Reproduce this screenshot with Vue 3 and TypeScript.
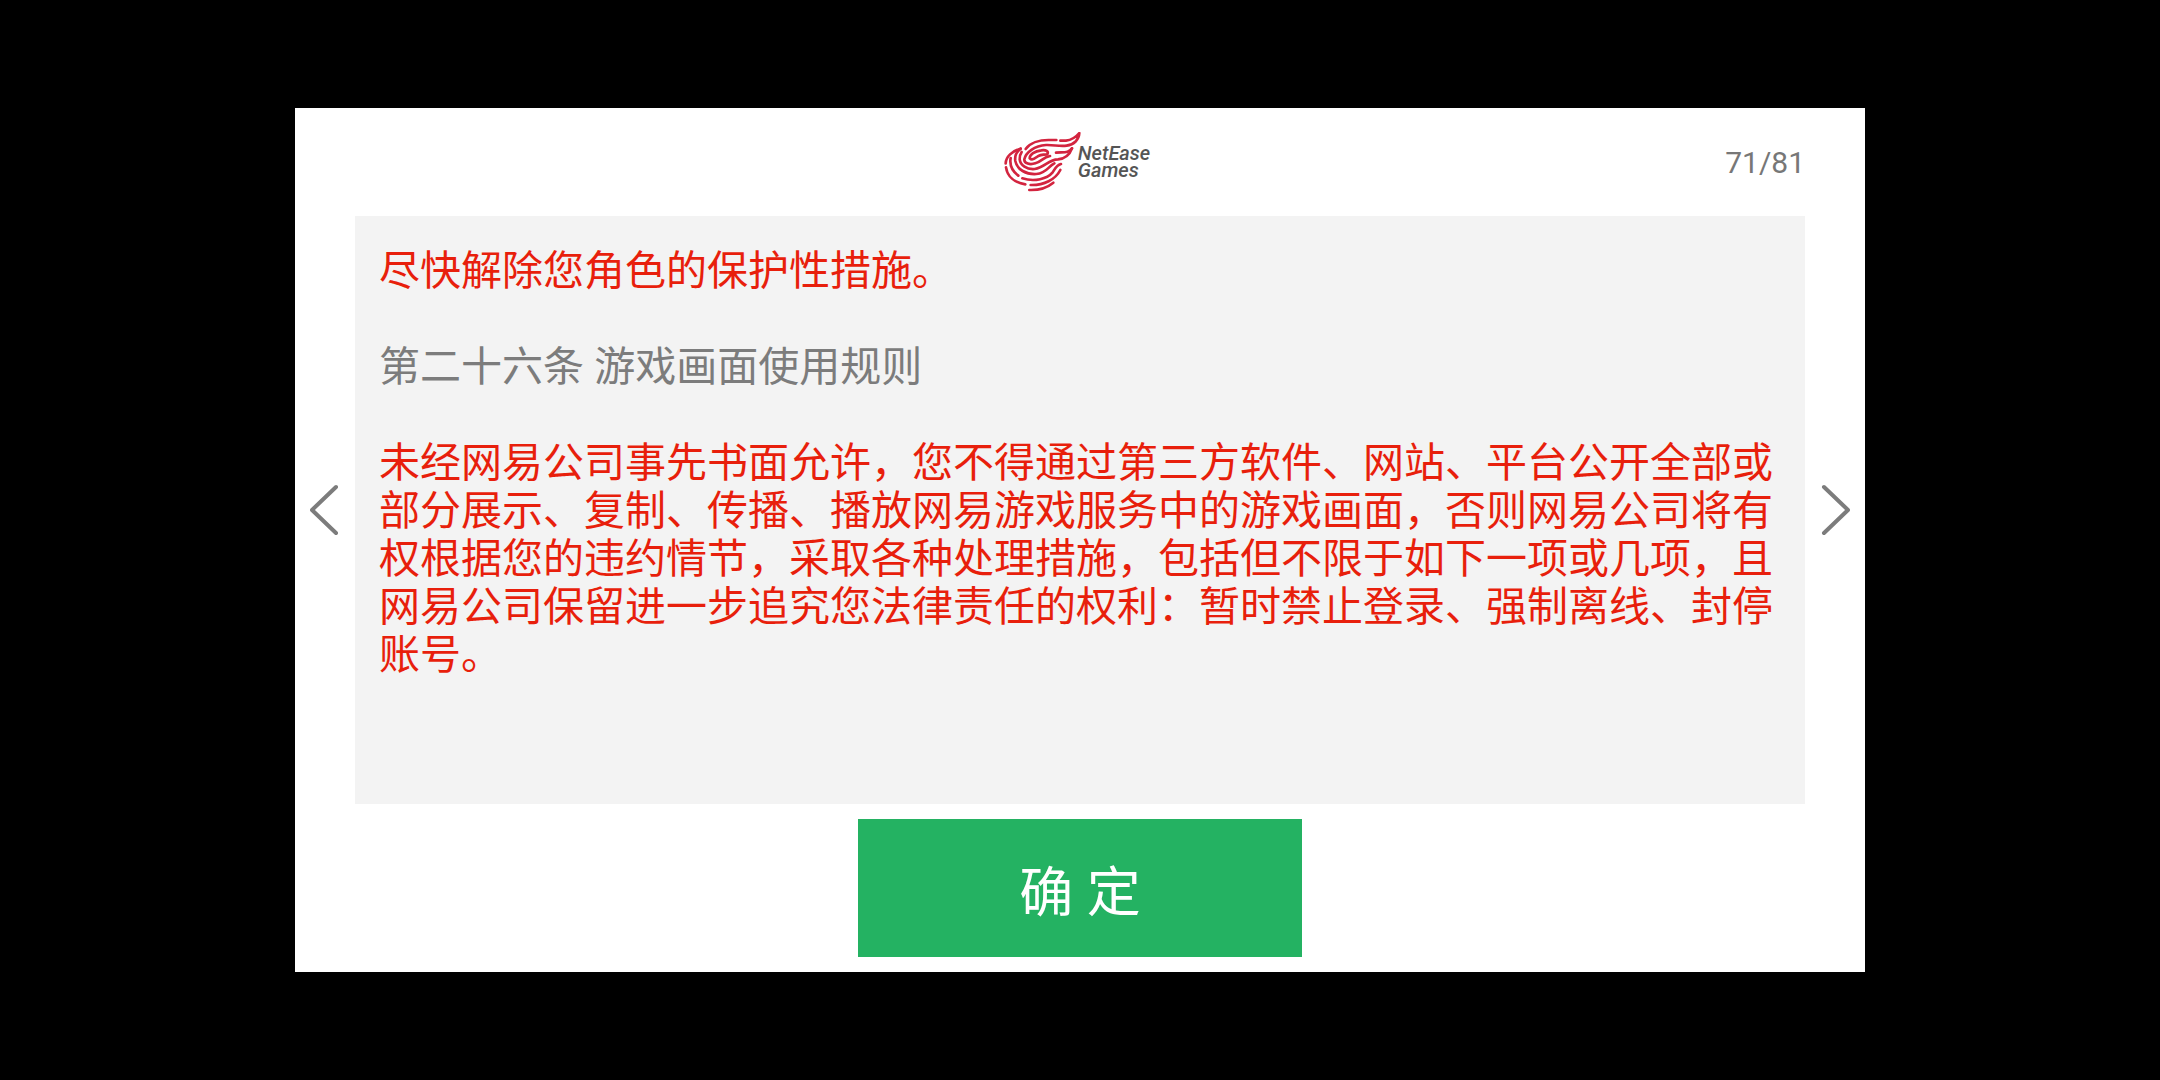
<script setup lang="ts">
import { ref } from 'vue'

interface Paragraph {
  text: string
  important: boolean
}

const page = ref(71)
const total = 81

const paragraphs: Paragraph[] = [
  { text: '尽快解除您角色的保护性措施。', important: true },
  { text: '第二十六条 游戏画面使用规则', important: false },
  {
    text: '未经网易公司事先书面允许，您不得通过第三方软件、网站、平台公开全部或部分展示、复制、传播、播放网易游戏服务中的游戏画面，否则网易公司将有权根据您的违约情节，采取各种处理措施，包括但不限于如下一项或几项，且网易公司保留进一步追究您法律责任的权利：暂时禁止登录、强制离线、封停账号。',
    important: true,
  },
]

function turn(step: number): void {
  page.value = Math.min(total, Math.max(1, page.value + step))
}
</script>

<template>
  <div class="screen">
    <main class="dialog" lang="zh-CN">
      <header class="head">
        <div class="brand">
          <svg class="mark" viewBox="12 12 240 180" aria-hidden="true">
            <g fill="none" stroke="#d3243f" stroke-width="8" stroke-linecap="round" stroke-linejoin="round">
              <path d="M77 63C90 45 118 36 145 36H169" />
              <path d="M181 38H198C216 36 228 27 238 15C237 35 222 50 200 53C178 56 160 50 138 51C104 53 77 73 73 94C72 107 90 111 106 106C124 101 130 87 150 84" />
              <path d="M216 61C206 76 192 72 168 74" />
              <path d="M216 61C208 83 196 92 174 94C144 95 136 118 104 123C80 125 61 112 59 94C58 84 61 78 65 72" />
              <path d="M142 79C147 70 138 65 124 67C104 69 89 80 89 91C94 96 102 94 109 88C117 80 125 79 142 79" />
              <path d="M62 62C36 69 18 86 17 106" />
              <path d="M62 62C48 72 44 86 46 99C51 125 79 140 109 138C141 135 143 116 163 106" />
              <path d="M32 90C28 112 38 130 55 143" />
              <path d="M67 151C104 163 142 152 158 133C165 123 168 112 183 108" />
              <path d="M18 118C22 145 43 164 76 169" />
              <path d="M92 171C132 172 166 155 181 126" />
              <path d="M88 186C117 187 143 178 160 164" />
            </g>
          </svg>
          <p class="brand-name" lang="en">NetEase<br />Games</p>
        </div>
        <span class="counter">{{ page }}/{{ total }}</span>
      </header>

      <div class="body">
        <button class="arrow" type="button" aria-label="上一页" @click="turn(-1)">
          <svg viewBox="0 0 30 52" aria-hidden="true"><path d="M26 3L2 26L26 49" /></svg>
        </button>
        <section class="content">
          <p v-for="(p, i) in paragraphs" :key="i" :class="{ important: p.important }">{{ p.text }}</p>
        </section>
        <button class="arrow" type="button" aria-label="下一页" @click="turn(1)">
          <svg viewBox="0 0 30 52" aria-hidden="true"><path d="M4 3L28 26L4 49" /></svg>
        </button>
      </div>

      <footer class="foot">
        <button class="confirm" type="button">确 定</button>
      </footer>
    </main>
  </div>
</template>

<style>
body {
  margin: 0;
  background: #000;
}
</style>

<style scoped>
.screen {
  box-sizing: border-box;
  display: flex;
  min-height: 100vh;
  padding: 108px 295px;
  background: #000;
  font-family: Roboto, 'Noto Sans CJK SC', sans-serif;
}

.dialog {
  display: flex;
  flex: 1;
  flex-direction: column;
  min-width: 0;
  background: #fff;
}

.head {
  display: grid;
  grid-template-columns: 1fr auto 1fr;
  align-items: center;
  height: 108px;
  padding: 0 60px;
}

.brand {
  display: flex;
  grid-column: 2;
  align-items: center;
  padding-right: 6px;
}

.mark {
  width: 80px;
  height: 60px;
}

.brand-name {
  margin: 0 0 0 -6px;
  color: #555;
  font-size: 20px;
  font-style: italic;
  font-weight: 500;
  line-height: 17px;
}

.counter {
  justify-self: end;
  color: #777;
  font-size: 30px;
}

.body {
  display: flex;
  flex: 1;
}

.arrow {
  display: flex;
  flex: 0 0 60px;
  align-items: center;
  justify-content: center;
  padding: 0;
  border: 0;
  background: none;
  cursor: pointer;
}

.arrow svg {
  width: 30px;
  height: 52px;
  fill: none;
  stroke: #7c7c7c;
  stroke-width: 4;
  stroke-linecap: round;
  stroke-linejoin: round;
}

.content {
  box-sizing: border-box;
  flex: 1;
  min-width: 0;
  padding: 31px 24px 0;
  background: #f3f3f3;
  color: #7c7c7c;
  font-size: 41px;
  line-height: 48px;
}

.content p {
  margin: 0 0 48px;
}

.content .important {
  color: #e81f0c;
}

.foot {
  display: flex;
  justify-content: center;
  padding: 15px 60px;
}

.confirm {
  width: 444px;
  height: 138px;
  padding: 0;
  border: 0;
  background: #24b262;
  color: #fff;
  font-family: inherit;
  font-size: 54px;
  cursor: pointer;
}

@media (max-width: 1200px) {
  .screen {
    padding: 24px;
  }
}
</style>
